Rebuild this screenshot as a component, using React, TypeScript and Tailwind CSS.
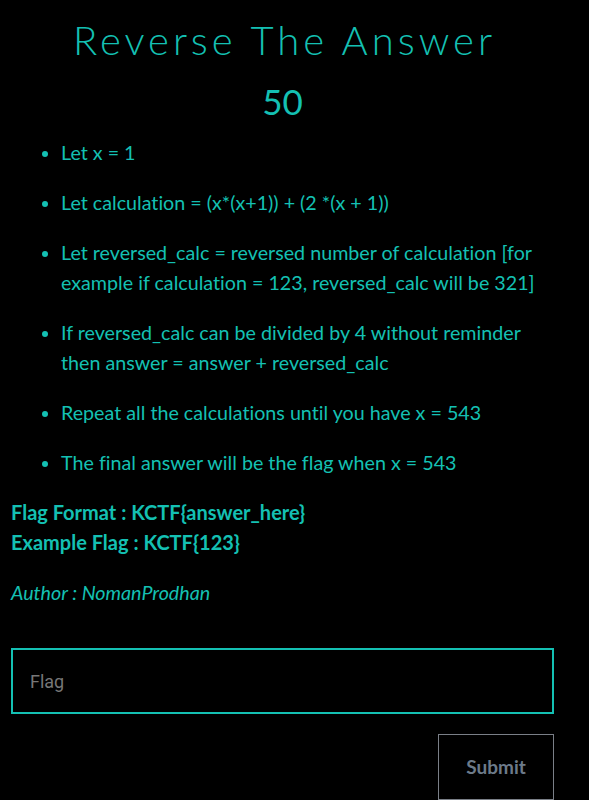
import React from 'react'

const steps = [
  'Let x = 1',
  'Let calculation = (x*(x+1)) + (2 *(x + 1))',
  'Let reversed_calc = reversed number of calculation [for example if calculation = 123, reversed_calc will be 321]',
  'If reversed_calc can be divided by 4 without reminder then answer = answer + reversed_calc',
  'Repeat all the calculations until you have x = 543',
  'The final answer will be the flag when x = 543',
]

export default function App() {
  return (
    <div className="min-h-[800px] bg-black text-[#14c0b3] font-['Lato',sans-serif]">
      <div className="ml-[11px] w-[543px] pt-[14px]">
        <h1 className="pl-[4px] text-center text-[40px] font-light leading-[52px] tracking-[4px] font-['Lato',sans-serif]">
          Reverse The Answer
        </h1>
        <div className="mt-[13px] text-center text-[35px] font-normal leading-[44px]">50</div>
        <ul className="mt-[15px] list-disc pl-[50px] text-[19.7px] leading-[30px] [font-variant-ligatures:none]">
          {steps.map((s) => (
            <li key={s} className="mb-[20px] pl-0">
              {s}
            </li>
          ))}
        </ul>
        <div className="-mt-[1px] text-[20px] font-bold leading-[30px]">
          <div>Flag Format : KCTF{'{answer_here}'}</div>
          <div>Example Flag : KCTF{'{123}'}</div>
        </div>
        <div className="mt-[21px] text-[19.7px] italic leading-[30px]">Author : NomanProdhan</div>
        <input
          placeholder="Flag"
          className="mt-[40px] block h-[66px] w-full border-2 border-[#14c0b3] bg-black px-[17px] text-[18px] text-white outline-none placeholder:text-[#777] font-['Roboto',sans-serif]"
        />
        <div className="mt-[20px] flex justify-end">
          <button className="h-[66px] w-[116px] border border-[#7a7f87] bg-black text-[19px] font-bold text-[#6c7a89] font-['Lato',sans-serif]">
            Submit
          </button>
        </div>
      </div>
    </div>
  )
}
